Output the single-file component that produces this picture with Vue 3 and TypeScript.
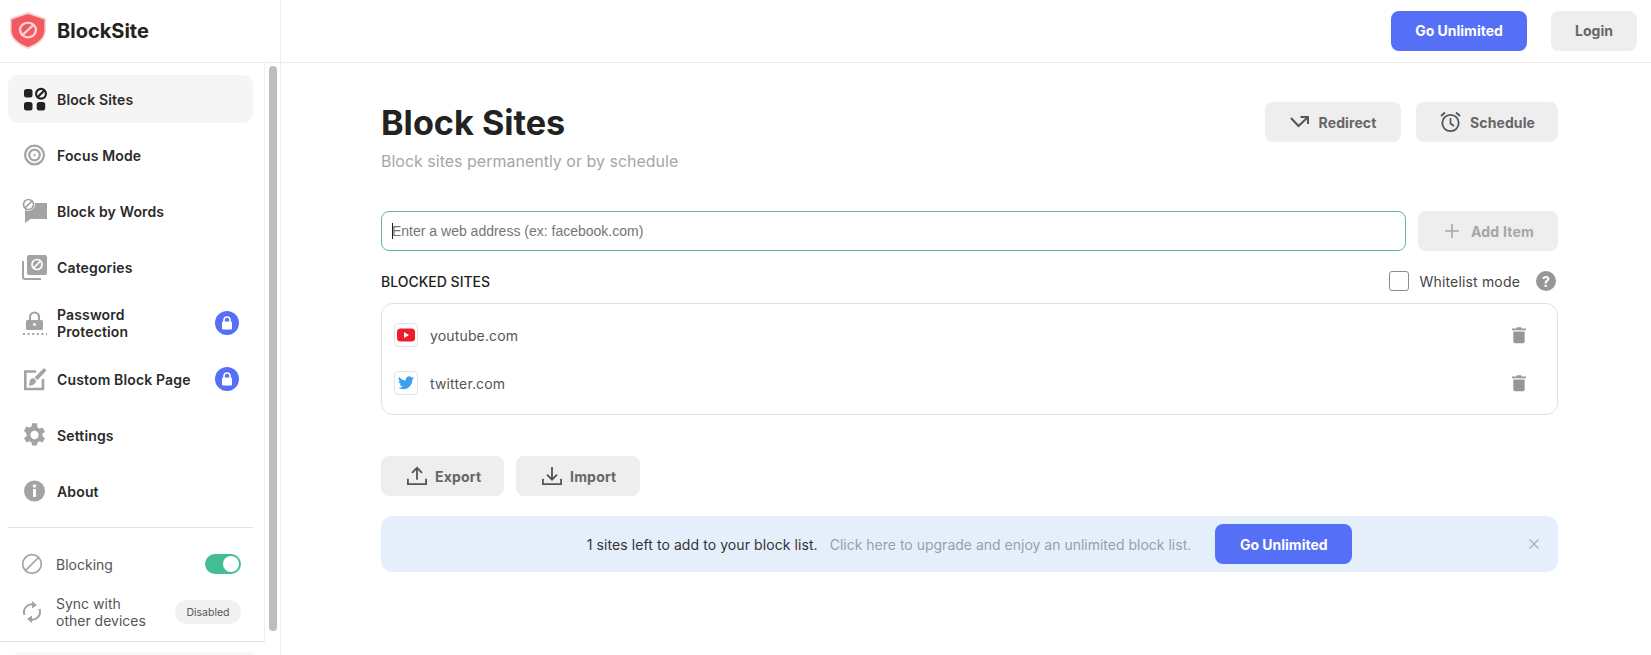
<script setup lang="ts">
interface NavItem { label: string; icon: string; locked?: boolean; active?: boolean }
const nav: NavItem[] = [
  { label: 'Block Sites', icon: 'grid', active: true },
  { label: 'Focus Mode', icon: 'target' },
  { label: 'Block by Words', icon: 'chat' },
  { label: 'Categories', icon: 'cats' },
  { label: 'Password Protection', icon: 'pass', locked: true },
  { label: 'Custom Block Page', icon: 'custom', locked: true },
  { label: 'Settings', icon: 'gear' },
  { label: 'About', icon: 'info' },
]
const sites = [
  { name: 'youtube.com', kind: 'yt' },
  { name: 'twitter.com', kind: 'tw' },
]
</script>

<template>
  <div class="app">
    <header class="top">
      <div class="brand">
        <svg class="logo" width="36" height="37" viewBox="3 1 34 38" preserveAspectRatio="none">
          <path d="M20 1 L37 7.5 V20 C37 29 29 35.500 20 39 C11 35.500 3 29 3 20 V7.500 Z" fill="#f9d3d3" />
          <path d="M20 3 L35.500 8.600 V20 C35.500 28 28 34 20 37 C12 34 4.500 28 4.500 20 V8.600 Z" fill="#f25a5f" />
          <circle cx="20" cy="19.500" r="7.500" fill="none" stroke="#fbd5d5" stroke-width="2.200" />
          <path d="M14.800 24.700 L25.200 14.300" stroke="#fbd5d5" stroke-width="2.200" />
        </svg>
        <span class="brand-name">BlockSite</span>
      </div>
      <div class="top-actions">
        <button class="btn primary head-go">Go Unlimited</button>
        <button class="btn grey login">Login</button>
      </div>
    </header>

    <div class="body">
      <aside class="side">
        <div class="side-upper">
          <div class="side-col">
            <nav class="nav">
              <a v-for="item in nav" :key="item.label" class="nav-item" :class="{ active: item.active }">
                <span class="nav-icon">
                  <svg v-if="item.icon === 'grid'" width="26" height="24" viewBox="0 0 26 24">
                    <rect x="2" y="2" width="8.500" height="8.500" rx="2.500" fill="#222" />
                    <rect x="2" y="15" width="8.500" height="8.500" rx="2.500" fill="#222" />
                    <rect x="14.700" y="15" width="8.500" height="8.500" rx="2.500" fill="#222" />
                    <circle cx="19" cy="6.800" r="4.900" fill="none" stroke="#222" stroke-width="2.200" />
                    <path d="M15.500 10.300 L22.500 3.300" stroke="#222" stroke-width="2.200" />
                  </svg>
                  <svg v-else-if="item.icon === 'target'" width="26" height="24" viewBox="0 0 26 24">
                    <circle cx="12.500" cy="12" r="9.400" fill="none" stroke="#a3a3a3" stroke-width="2.200" />
                    <circle cx="12.500" cy="12" r="5.300" fill="none" stroke="#a3a3a3" stroke-width="2.200" />
                    <circle cx="12.500" cy="12" r="1.600" fill="#c4c4c4" />
                  </svg>
                  <svg v-else-if="item.icon === 'chat'" width="26" height="26" viewBox="0 0 26 26">
                    <path d="M3 5 H25 V21 H8.500 L3 25 Z" fill="#a3a3a3" />
                    <circle cx="6.500" cy="6.500" r="6.500" fill="#fff" />
                    <circle cx="6.500" cy="6.500" r="5" fill="none" stroke="#a3a3a3" stroke-width="1.700" />
                    <path d="M3 10 L10 3" stroke="#a3a3a3" stroke-width="1.700" />
                  </svg>
                  <svg v-else-if="item.icon === 'cats'" width="26" height="26" viewBox="0 0 26 26">
                    <path d="M1 7 V23 A2 2 0 0 0 3 25 H19" fill="none" stroke="#a3a3a3" stroke-width="2" />
                    <rect x="5" y="1" width="20" height="20" rx="2" fill="#a3a3a3" />
                    <circle cx="15" cy="10.500" r="5" fill="none" stroke="#fff" stroke-width="1.700" />
                    <path d="M11.500 14 L18.500 7" stroke="#fff" stroke-width="1.700" />
                  </svg>
                  <svg v-else-if="item.icon === 'pass'" width="26" height="28" viewBox="0 0 26 28">
                    <path d="M8 11 V8 A4.500 4.500 0 0 1 17 8 V11" fill="none" stroke="#a3a3a3" stroke-width="2.200" />
                    <rect x="4" y="11" width="17" height="10" rx="1.500" fill="#a3a3a3" />
                    <circle cx="12.500" cy="15.500" r="1.400" fill="#fff" />
                    <path d="M1 25 H25" stroke="#a3a3a3" stroke-width="2" stroke-dasharray="2 2.600" />
                  </svg>
                  <svg v-else-if="item.icon === 'custom'" width="26" height="24" viewBox="0 0 26 24">
                    <path d="M21 12 V22 H3.300 V4.500 H14" fill="none" stroke="#a3a3a3" stroke-width="2.600" />
                    <path d="M22 1 L24.500 3.500 L15.500 13 L12.500 10.500 Z" fill="#a3a3a3" />
                    <path d="M7.500 15.500 C7.500 12.500 10 10.500 12 11.500 L14 13.500 C14 16.500 11 19 6.500 18.500 C7.500 17.500 7.500 16.500 7.500 15.500 Z" fill="#a3a3a3" />
                  </svg>
                  <svg v-else-if="item.icon === 'gear'" width="26" height="24" viewBox="0 0 26 24">
                    <g transform="translate(12.500 12) scale(1.180) translate(-12.700 -12)" fill="#a3a3a3">
                      <path d="M19.400 13 a7.500 7.500 0 0 0 0-2 l2.200-1.700-2.100-3.600-2.600 1a7.500 7.500 0 0 0-1.700-1 L14.800 2h-4.200l-.4 2.700a7.500 7.500 0 0 0-1.700 1l-2.600-1-2.100 3.600L6 11a7.500 7.500 0 0 0 0 2l-2.200 1.700 2.100 3.600 2.600-1a7.500 7.500 0 0 0 1.700 1l.4 2.700h4.200l.4-2.700a7.500 7.500 0 0 0 1.700-1l2.600 1 2.100-3.600z M12.700 15.500a3.500 3.500 0 1 1 0-7 3.500 3.500 0 0 1 0 7z" fill-rule="evenodd" />
                    </g>
                  </svg>
                  <svg v-else width="26" height="24" viewBox="0 0 26 24">
                    <circle cx="12.500" cy="12" r="10.500" fill="#a3a3a3" />
                    <rect x="11" y="10" width="3" height="8" fill="#fff" />
                    <circle cx="12.500" cy="7" r="1.800" fill="#fff" />
                  </svg>
                </span>
                <span class="nav-label" :class="{ narrow: item.icon === 'pass' }">{{ item.label }}</span>
                <span v-if="item.locked" class="lock">
                  <svg width="12" height="14" viewBox="0 0 12 14">
                    <path d="M3 6 V4 A3 3 0 0 1 9 4 V6" fill="none" stroke="#fff" stroke-width="1.600" />
                    <rect x="1" y="5.500" width="10" height="8" rx="1.200" fill="#fff" />
                  </svg>
                </span>
              </a>
            </nav>

            <div class="divider"></div>

            <div class="opt blocking">
              <svg width="22" height="22" viewBox="0 0 22 22">
                <circle cx="11" cy="11" r="9.300" fill="none" stroke="#a3a3a3" stroke-width="1.700" />
                <path d="M4.500 17.500 L17.500 4.500" stroke="#a3a3a3" stroke-width="1.700" />
              </svg>
              <span class="opt-label">Blocking</span>
              <span class="toggle"><span class="knob"></span></span>
            </div>
            <div class="opt sync">
              <svg width="22" height="24" viewBox="0 0 22 24">
                <path d="M3.500 15 A8 8 0 0 1 13 4.500" fill="none" stroke="#a3a3a3" stroke-width="2" />
                <path d="M11 1 L16 5 L11 8.500 Z" fill="#a3a3a3" />
                <path d="M18.500 9 A8 8 0 0 1 9 19.500" fill="none" stroke="#a3a3a3" stroke-width="2" />
                <path d="M11 23 L6 19 L11 15.500 Z" fill="#a3a3a3" />
              </svg>
              <span class="opt-label">Sync with<br />other devices</span>
              <span class="pill">Disabled</span>
            </div>
          </div>
          <div class="scrollbar"><div class="thumb"></div></div>
        </div>
        <div class="peek"></div>
      </aside>

      <main class="main">
        <section class="title-row">
          <div class="title-text">
            <h1>Block Sites</h1>
            <p class="sub">Block sites permanently or by schedule</p>
          </div>
          <div class="title-actions">
            <button class="btn grey redirect">
              <svg width="19" height="12" viewBox="0 0 19 12">
                <path d="M1 2 L8.500 10 L17.500 1.500 M10.500 1 H18 V8" fill="none" stroke="#555" stroke-width="2" />
              </svg>
              Redirect
            </button>
            <button class="btn grey schedule">
              <svg width="23" height="22" viewBox="0 0 22 22">
                <circle cx="11" cy="12" r="8.200" fill="none" stroke="#555" stroke-width="1.800" />
                <path d="M11 7 V12.500 L14.500 15" fill="none" stroke="#555" stroke-width="1.700" />
                <path d="M1.500 5 L5.500 1.500 M20.500 5 L16.500 1.500" stroke="#555" stroke-width="1.800" />
              </svg>
              Schedule
            </button>
          </div>
        </section>

        <section class="add-row">
          <div class="field">
            <span class="caret"></span>
            <input type="text" placeholder="Enter a web address (ex: facebook.com)" />
          </div>
          <button class="btn grey add">
            <svg width="16" height="16" viewBox="0 0 16 16">
              <path d="M8 1 V15 M1 8 H15" stroke="#a6a6a6" stroke-width="1.600" />
            </svg>
            Add Item
          </button>
        </section>

        <section class="list-head">
          <h2>BLOCKED SITES</h2>
          <label class="wl">
            <span class="check"></span>
            <span>Whitelist mode</span>
          </label>
          <span class="help">?</span>
        </section>

        <ul class="list">
          <li v-for="s in sites" :key="s.name" class="row">
            <span class="fav">
              <svg v-if="s.kind === 'yt'" width="18" height="14" viewBox="0 0 18 14">
                <rect x="0" y="0.500" width="18" height="13" rx="3.500" fill="#ee1c2a" />
                <path d="M7 4 L12 7 L7 10 Z" fill="#fff" />
              </svg>
              <svg v-else width="16" height="14" viewBox="0 0 24 20">
                <path d="M24 2.400a9.800 9.800 0 0 1-2.800.8A4.900 4.900 0 0 0 23.300.5a9.900 9.900 0 0 1-3.100 1.200 4.900 4.900 0 0 0-8.400 4.500A14 14 0 0 1 1.700.9a4.900 4.900 0 0 0 1.500 6.600 4.900 4.900 0 0 1-2.200-.6v.1a4.900 4.900 0 0 0 3.900 4.800 4.900 4.900 0 0 1-2.200.1 4.900 4.900 0 0 0 4.600 3.400A9.900 9.900 0 0 1 0 17.300 14 14 0 0 0 7.500 19.500c9.100 0 14-7.500 14-14v-.6A10 10 0 0 0 24 2.400z" fill="#3aa0ea" />
              </svg>
            </span>
            <span class="site">{{ s.name }}</span>
            <svg class="trash" width="14" height="18" viewBox="0 0 16 20">
              <path d="M5.500 1 H10.500 L11 2.500 H16 V4.500 H0 V2.500 H5 Z" fill="#979797" />
              <path d="M1.500 6 H14.500 V17.500 A2 2 0 0 1 12.500 19.500 H3.500 A2 2 0 0 1 1.500 17.500 Z" fill="#979797" />
            </svg>
          </li>
        </ul>

        <section class="io">
          <button class="btn grey export">
            <svg width="20" height="20" viewBox="0 0 22 22">
              <path d="M11 15 V2 M5.500 7.500 L11 2 L16.500 7.500 M1 14 V20 H21 V14" fill="none" stroke="#555" stroke-width="2" />
            </svg>
            Export
          </button>
          <button class="btn grey import">
            <svg width="20" height="20" viewBox="0 0 22 22">
              <path d="M11 1 V15 M5.500 9.500 L11 15 L16.500 9.500 M1 14 V20 H21 V14" fill="none" stroke="#555" stroke-width="2" />
            </svg>
            Import
          </button>
        </section>

        <section class="banner">
          <span class="b-strong">1 sites left to add to your block list.</span>
          <span class="b-light">Click here to upgrade and enjoy an unlimited block list.</span>
          <button class="btn primary b-go">Go Unlimited</button>
          <svg class="b-close" width="12" height="12" viewBox="0 0 12 12">
            <path d="M1.500 1.500 L10.500 10.500 M10.500 1.500 L1.500 10.500" stroke="#a9adb5" stroke-width="1.300" />
          </svg>
        </section>
      </main>
    </div>
  </div>
</template>

<style>
html, body { margin: 0; background: #fff; overflow: hidden; }
</style>

<style scoped>
.app {
  width: 1651px;
  height: 655px;
  overflow: hidden;
  font-family: Inter, "Liberation Sans", sans-serif;
  color: #222;
  display: flex;
  flex-direction: column;
}
.btn {
  font-family: inherit;
  border: none;
  border-radius: 8px;
  height: 40px;
  padding: 0;
  font-size: 14px;
  font-weight: 700;
  display: flex;
  align-items: center;
  justify-content: center;
  flex: none;
}
.primary { background: #5570f6; color: #fff; }
.grey { background: #eeeeee; color: #666; }

.top {
  height: 62px;
  border-bottom: 1px solid #ededed;
  display: flex;
  flex: none;
}
.brand {
  width: 281px;
  box-sizing: border-box;
  border-right: 1px solid #ededed;
  display: flex;
  align-items: center;
  padding: 0 0 1px 10px;
}
.logo { flex: none; }
.brand-name {
  margin-left: 11px;
  font-size: 20px;
  font-weight: 700;
  color: #222;
}
.top-actions {
  flex: 1;
  display: flex;
  justify-content: flex-end;
  align-items: center;
  gap: 24px;
  padding: 0 14px 1px 0;
}
.head-go { width: 136px; }
.login { width: 86px; }

.body { flex: 1; display: flex; min-height: 0; }
.side {
  width: 281px;
  box-sizing: border-box;
  border-right: 1px solid #ededed;
  display: flex;
  flex-direction: column;
  flex: none;
  height: 100%;
}
.side-upper { display: flex; height: 579px; flex: none; }
.side-col {
  width: 265px;
  flex: none;
  box-sizing: border-box;
  padding: 12px 0 0 8px;
  border-right: 1px solid #f0f0f0;
  border-bottom: 1px solid #e4e4e4;
}
.nav { width: 245px; display: flex; flex-direction: column; gap: 8px; }
.nav-item {
  height: 48px;
  border-radius: 10px;
  display: flex;
  align-items: center;
  padding: 0 14px;
  box-sizing: border-box;
}
.nav-item.active { background: #f5f5f5; }
.nav-icon {
  width: 35px;
  flex: none;
  display: flex;
  align-items: center;
  justify-content: flex-start;
}
.nav-label {
  flex: 1;
  font-size: 14px;
  font-weight: 600;
  line-height: 17px;
  color: #2a2a2a;
  letter-spacing: 0.150px;
}
.nav-label.narrow { padding-right: 40px; }
.lock {
  width: 24px;
  height: 24px;
  border-radius: 50%;
  background: #5570f6;
  display: flex;
  align-items: center;
  justify-content: center;
  flex: none;
}
.divider { width: 245px; height: 1px; background: #e2e2e2; margin-top: 12px; }
.opt {
  width: 245px;
  box-sizing: border-box;
  display: flex;
  align-items: center;
  padding: 0 12px 0 13px;
  height: 48px;
  font-size: 14px;
  color: #555;
  line-height: 17px;
}
.blocking { margin-top: 12px; }
.opt svg { flex: none; }
.opt-label { flex: 1; margin-left: 13px; }
.toggle {
  width: 36px;
  height: 20px;
  border-radius: 10px;
  background: #45bd94;
  position: relative;
}
.knob {
  position: absolute;
  right: 2px;
  top: 2px;
  width: 16px;
  height: 16px;
  border-radius: 50%;
  background: #fff;
}
.pill {
  width: 66px;
  height: 24px;
  border-radius: 12px;
  background: #f1f1f1;
  font-size: 10.500px;
  color: #555;
  display: flex;
  align-items: center;
  justify-content: center;
}
.scrollbar { flex: 1; padding: 3px 2px 0 4px; }
.thumb { width: 8px; height: 565px; background: #bdbdbd; border-radius: 4px; }
.peek {
  margin: 10px 0 0 12px;
  width: 245px;
  height: 20px;
  background: #f8f8f8;
  border-radius: 8px;
  flex: none;
}

.main {
  flex: 1;
  padding: 0 93px 0 100px;
  min-width: 0;
}
.title-row {
  display: flex;
  justify-content: space-between;
  align-items: flex-start;
  padding-top: 39px;
}
.title-text { padding-top: 1px; }
h1 {
  margin: 0;
  font-size: 34.200px;
  line-height: 40px;
  font-weight: 700;
  color: #222;
}
.sub {
  margin: 8px 0 0;
  font-size: 16px;
  line-height: 20px;
  color: #a6a6a6;
}
.title-actions { display: flex; gap: 15px; }
.title-actions .btn { gap: 10px; letter-spacing: 0.100px; }
.redirect { width: 136px; }
.title-actions .schedule { width: 142px; gap: 8px; }

.add-row { display: flex; gap: 12px; margin-top: 40px; }
.field {
  flex: 1;
  height: 40px;
  box-sizing: border-box;
  border: 1px solid #5fb89c;
  border-radius: 8px;
  display: flex;
  align-items: center;
  padding-left: 10px;
  position: relative;
}
.caret {
  position: absolute;
  left: 10px;
  top: 11px;
  width: 1px;
  height: 16px;
  background: #222;
}
.field input {
  flex: 1;
  border: none;
  outline: none;
  padding: 0;
  background: transparent;
  font-family: "Liberation Sans", sans-serif;
  font-size: 14px;
}
.field input::placeholder { color: #757575; opacity: 1; }
.add { width: 140px; gap: 11px; padding-left: 2px; box-sizing: border-box; color: #a6a6a6; letter-spacing: 0.200px; }

.list-head {
  display: flex;
  align-items: center;
  margin-top: 19px;
  height: 22px;
}
h2 {
  margin: 0;
  flex: 1;
  font-size: 14px;
  font-weight: 500;
  color: #222;
}
.wl {
  display: flex;
  align-items: center;
  gap: 10px;
  font-size: 14px;
  color: #444;
  letter-spacing: 0.170px;
}
.check {
  width: 20px;
  height: 20px;
  box-sizing: border-box;
  border: 1.500px solid #8c8c8c;
  border-radius: 3px;
  background: #fff;
}
.help {
  width: 20px;
  height: 20px;
  border-radius: 50%;
  background: #979797;
  color: #fff;
  font-size: 14px;
  font-weight: 700;
  display: flex;
  align-items: center;
  justify-content: center;
  margin-left: 16px;
  margin-right: 2px;
}
.list {
  list-style: none;
  margin: 11px 0 0;
  height: 112px;
  box-sizing: border-box;
  border: 1px solid #e0e0e0;
  border-radius: 12px;
  padding: 19px 31px 0 12px;
  display: flex;
  flex-direction: column;
  gap: 24px;
}
.row { display: flex; align-items: center; height: 24px; }
.fav {
  width: 24px;
  height: 24px;
  box-sizing: border-box;
  border: 1px solid #e4e4e4;
  border-radius: 4px;
  display: flex;
  align-items: center;
  justify-content: center;
  flex: none;
}
.site { flex: 1; margin-left: 12px; font-size: 14px; color: #555; letter-spacing: 0.150px; }
.trash { flex: none; }
.io { display: flex; gap: 12px; margin-top: 41px; }
.io .btn { justify-content: flex-start; gap: 8.500px; padding-left: 25.500px; letter-spacing: 0.200px; box-sizing: border-box; }
.export { width: 123px; }
.import { width: 124px; }
.banner {
  margin-top: 20px;
  height: 56px;
  background: #e5effc;
  border-radius: 12px;
  display: flex;
  align-items: center;
  justify-content: center;
  position: relative;
  font-size: 14px;
}
.b-strong { color: #333; letter-spacing: 0.080px; }
.b-light { color: #9a9ea6; margin-left: 12px; }
.b-go { width: 137px; margin-left: 24px; }
.b-close { position: absolute; right: 18px; top: 22px; }
</style>
